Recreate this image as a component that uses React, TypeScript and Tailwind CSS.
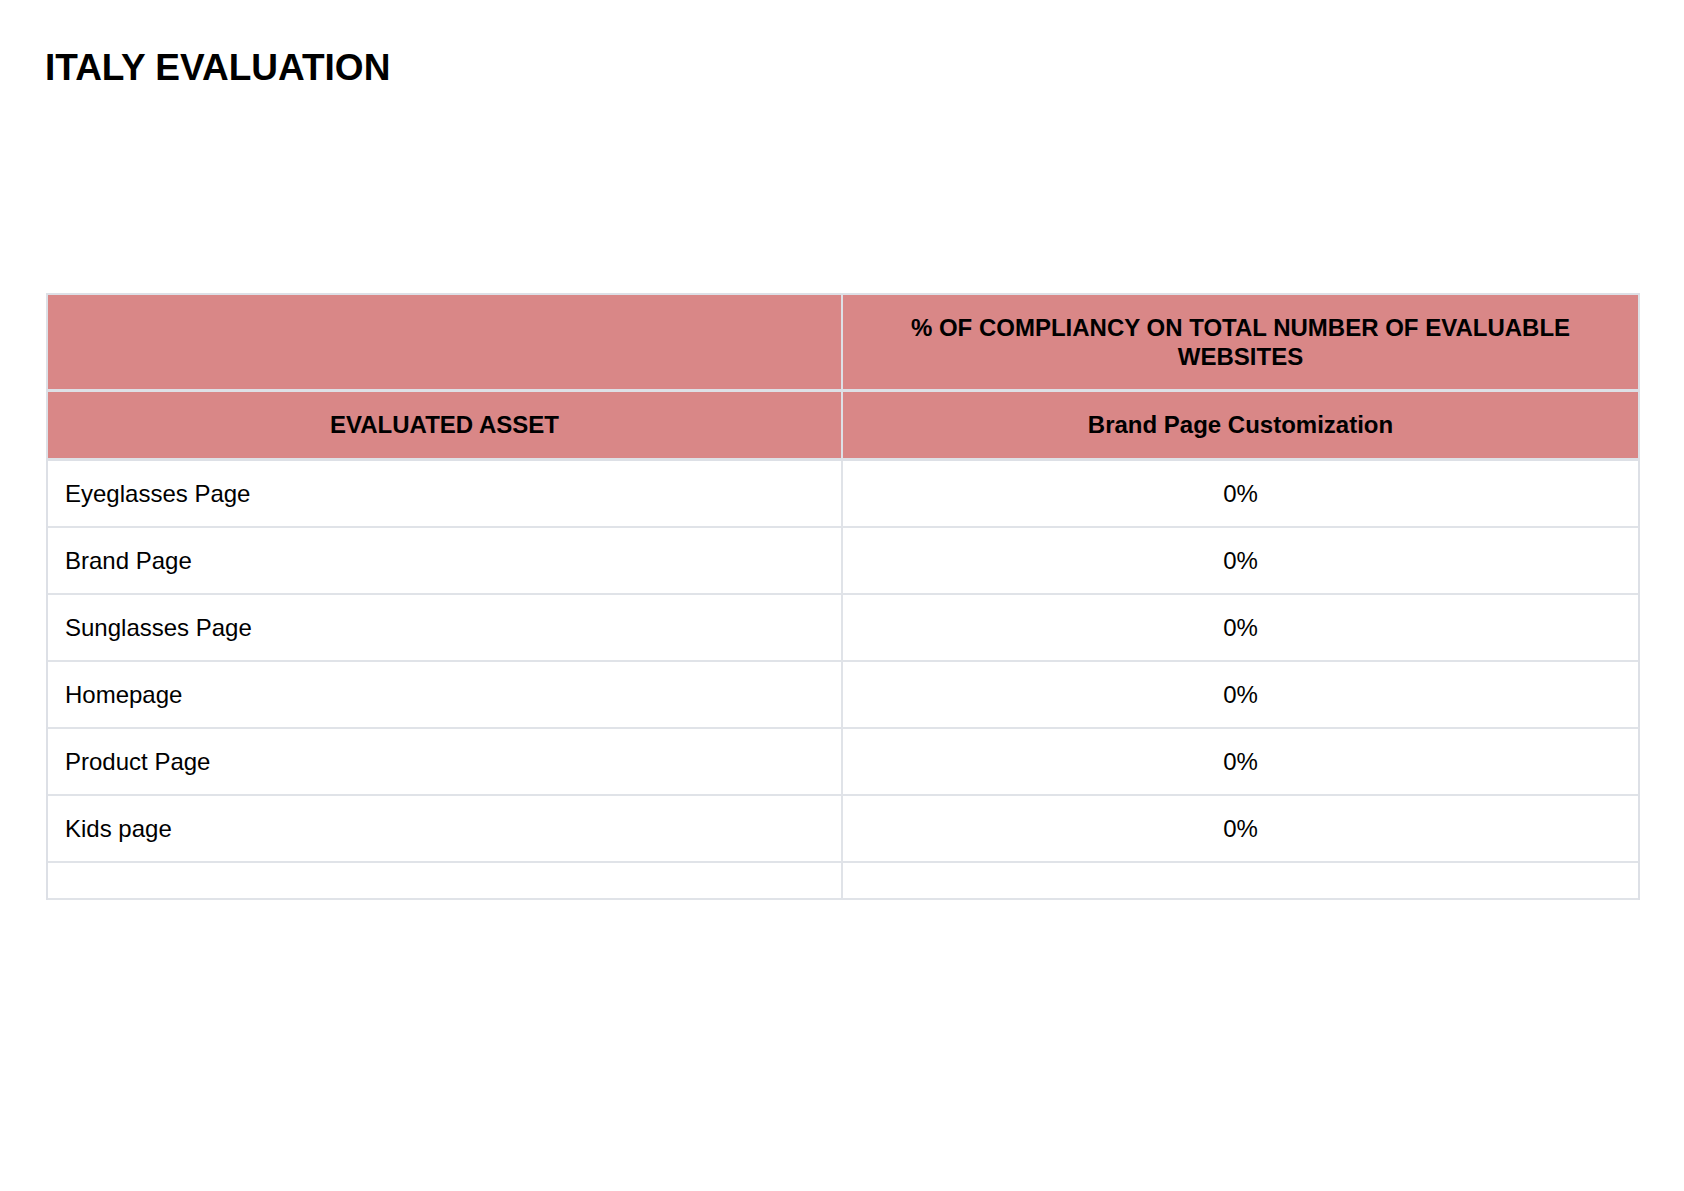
const rows = [
  { asset: "Eyeglasses Page", value: "0%" },
  { asset: "Brand Page", value: "0%" },
  { asset: "Sunglasses Page", value: "0%" },
  { asset: "Homepage", value: "0%" },
  { asset: "Product Page", value: "0%" },
  { asset: "Kids page", value: "0%" },
];

const App = () => {
  return (
    <div className="min-h-screen bg-white pl-[46px] pt-[46px] font-['Liberation_Sans',Arial,sans-serif] text-black">
      <h1 className="-ml-px text-[37px] font-bold leading-[43px]">ITALY EVALUATION</h1>

      <div className="mt-[204px] w-[1594px] border-x-2 border-t-2 border-[#dde0e6]">
        {/* header */}
        <div className="grid h-[97px] grid-cols-2 border-b-[3px] border-[#dde0e6] bg-[#d98787]">
          <div className="border-r-2 border-[#dde0e6]" />
          <div className="flex items-center justify-center px-6 text-center text-[24px] font-bold leading-[29px]">
            % OF COMPLIANCY ON TOTAL NUMBER OF EVALUABLE WEBSITES
          </div>
        </div>
        <div className="grid h-[69px] grid-cols-2 border-b-[3px] border-[#dde0e6] bg-[#d98787] text-[24px] font-bold">
          <div className="flex items-center justify-center border-r-2 border-[#dde0e6]">EVALUATED ASSET</div>
          <div className="flex items-center justify-center">Brand Page Customization</div>
        </div>

        {/* body */}
        {rows.map((row) => (
          <div key={row.asset} className="grid h-[67px] grid-cols-2 border-b-2 border-[#e0e3e8] text-[24px]">
            <div className="flex items-center border-r-2 border-[#e0e3e8] pl-[17px]">{row.asset}</div>
            <div className="flex items-center justify-center">{row.value}</div>
          </div>
        ))}
        <div className="grid h-[37px] grid-cols-2 border-b-2 border-[#e0e3e8]">
          <div className="border-r-2 border-[#e0e3e8]" />
          <div />
        </div>
      </div>
    </div>
  );
};

export default App;
